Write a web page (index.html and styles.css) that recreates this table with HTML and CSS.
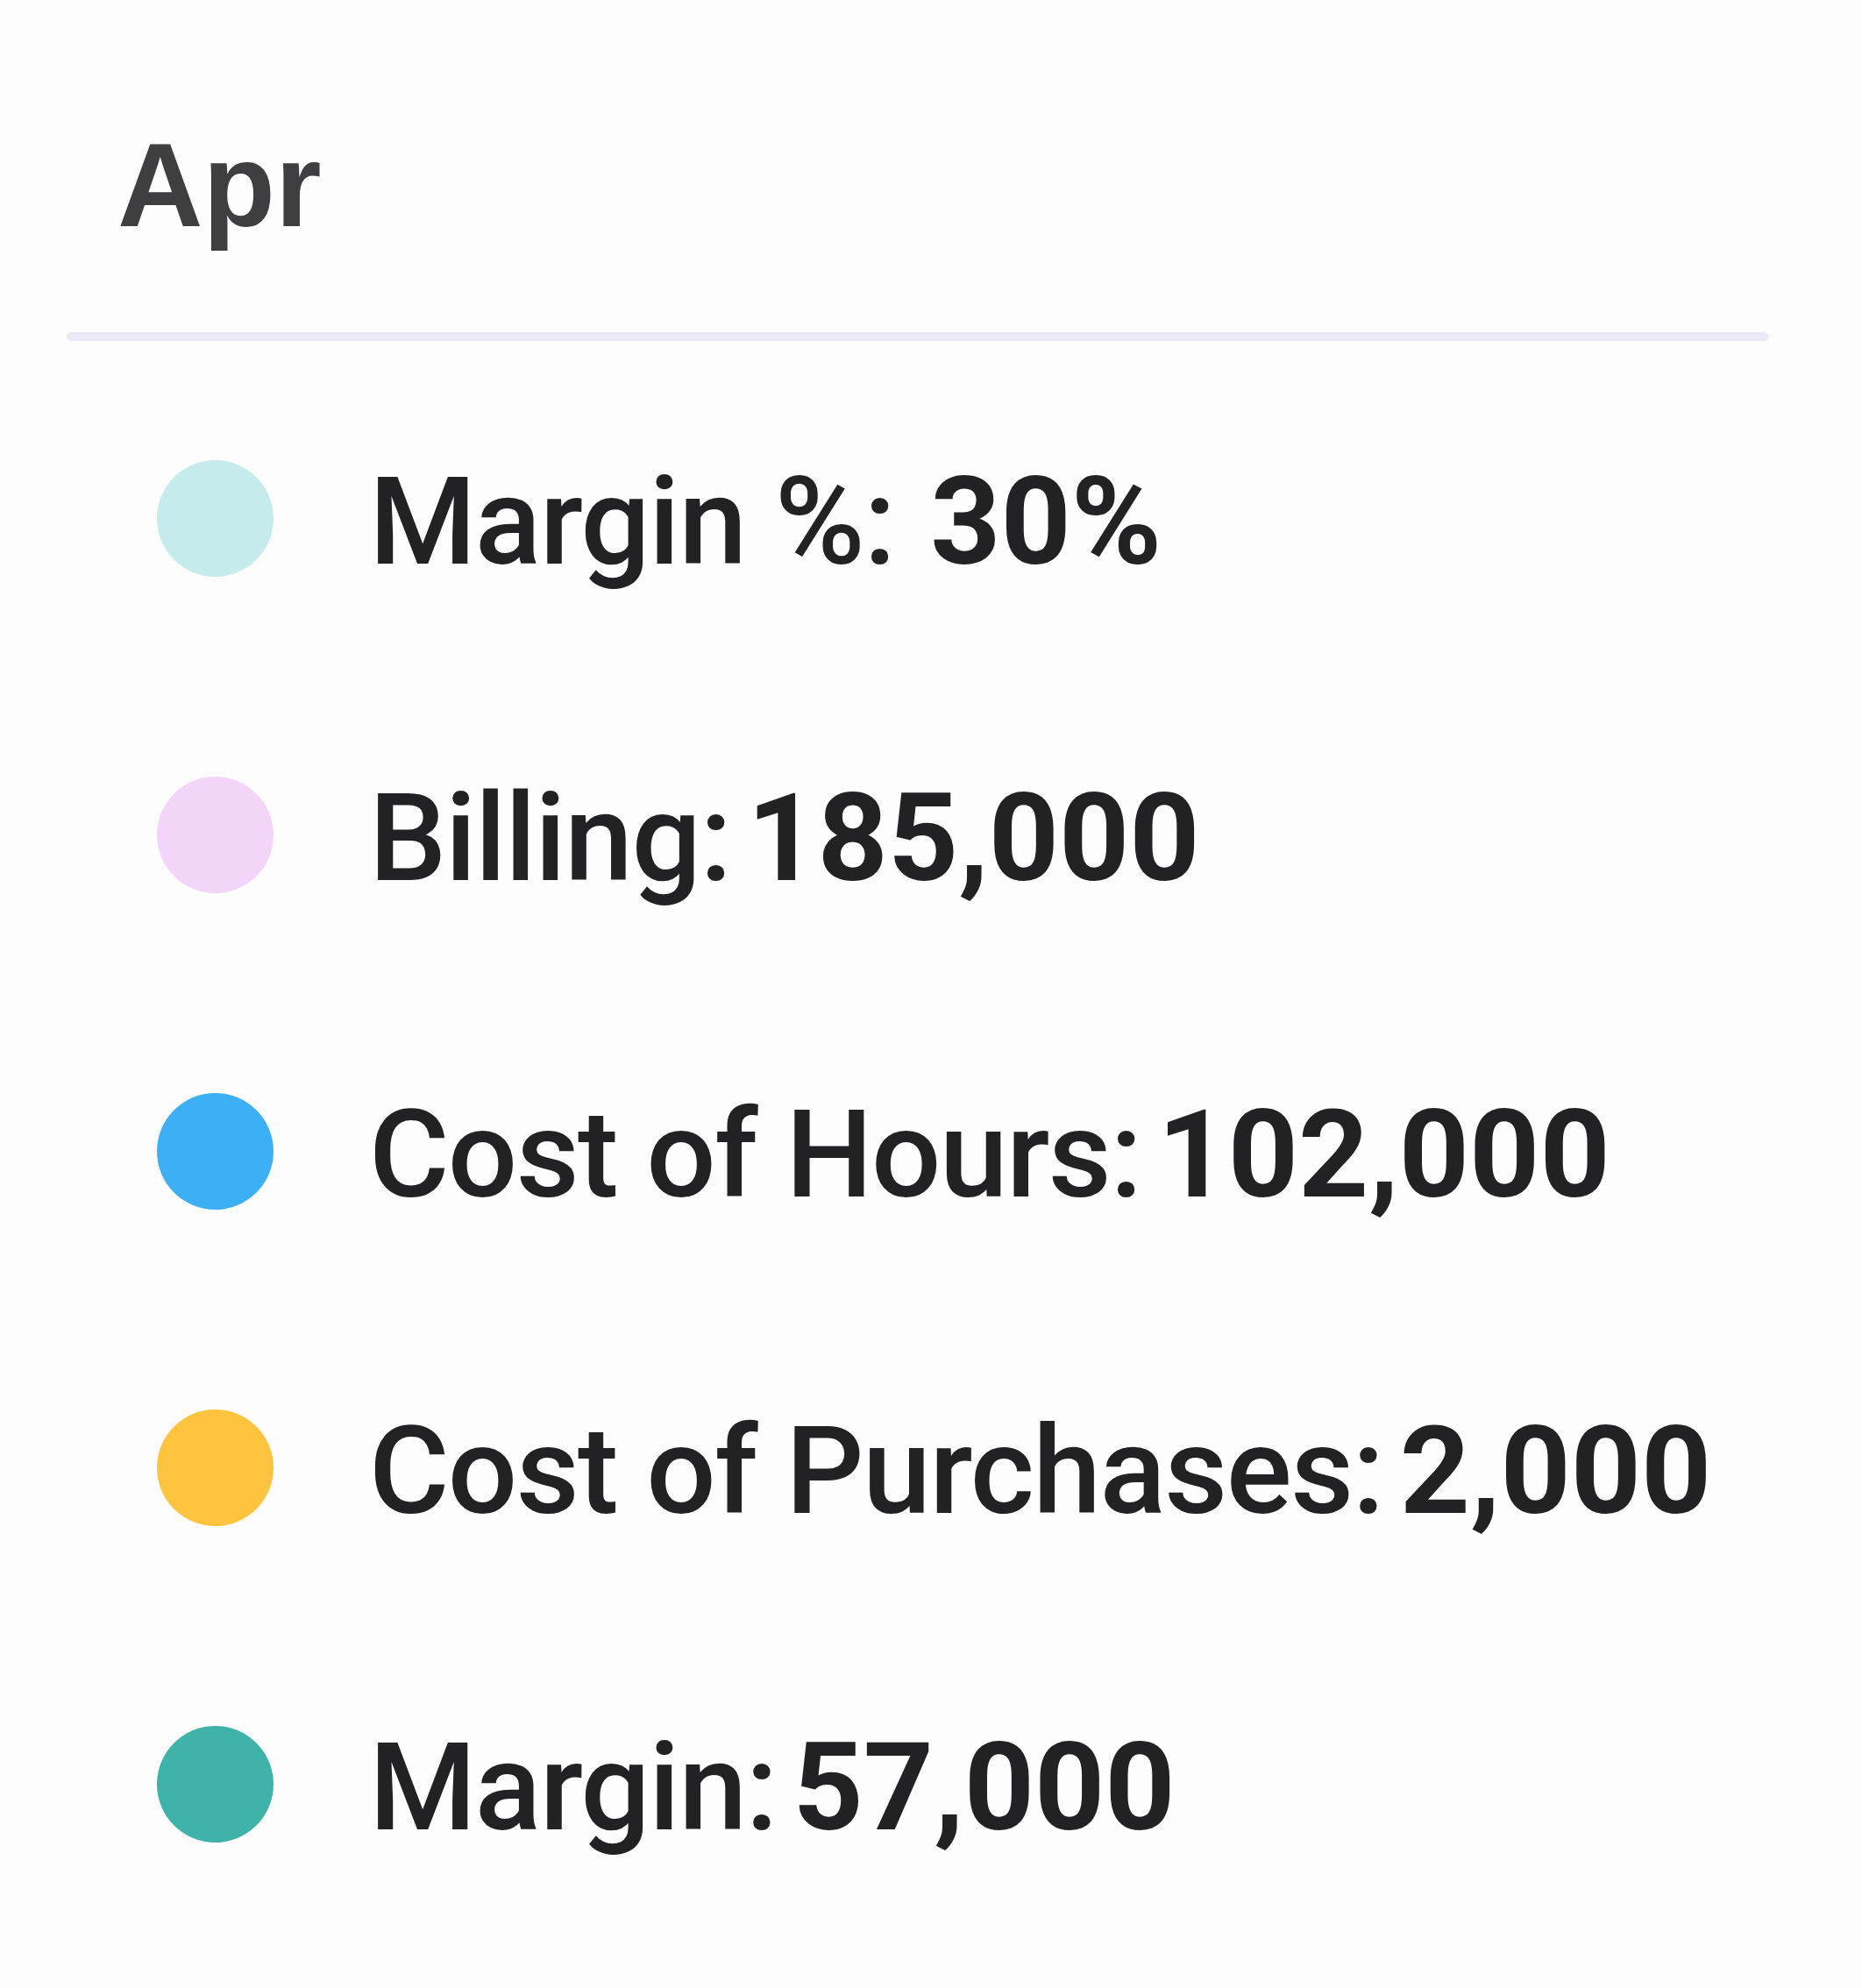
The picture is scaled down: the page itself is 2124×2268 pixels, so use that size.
FILE: index.html
```html
<!DOCTYPE html>
<html lang="en">
<head>
<meta charset="utf-8">
<title>Apr</title>
<link rel="stylesheet" href="styles.css">
</head>
<body>
<div class="card">
  <div class="header">Apr</div>
  <div class="divider"></div>
  <ul class="legend">
    <li class="row"><span class="dot dot-mpct"></span><div class="text"><span class="label">Margin %:</span> <span class="value value-wide">30%</span></div></li>
    <li class="row"><span class="dot dot-billing"></span><div class="text"><span class="label">Billing:</span> <span class="value">185,000</span></div></li>
    <li class="row"><span class="dot dot-hours"></span><div class="text"><span class="label">Cost of Hours:</span> <span class="value">102,000</span></div></li>
    <li class="row"><span class="dot dot-purchases"></span><div class="text"><span class="label">Cost of Purchases:</span> <span class="value">2,000</span></div></li>
    <li class="row"><span class="dot dot-margin"></span><div class="text"><span class="label">Margin:</span> <span class="value">57,000</span></div></li>
  </ul>
</div>
</body>
</html>
```

FILE: styles.css
```css
html, body {
  margin: 0;
  padding: 0;
  background: #ffffff;
}

.card {
  width: 2124px;
  height: 2268px;
  background: #fefdfe;
}

.header {
  padding: 144px 0 0 134px;
  font-family: "Liberation Sans", Arial, sans-serif;
  font-weight: 700;
  font-size: 135px;
  line-height: 135px;
  color: #3f3e41;
  height: 135px;
}

.divider {
  margin: 100px 0 0 76px;
  width: 1942px;
  height: 10px;
  border-radius: 5px;
  background: #ece9f6;
}

.legend {
  list-style: none;
  margin: 0;
  padding: 22px 0 0 0;
}

.row {
  display: flex;
  align-items: center;
  height: 361px;
  padding-left: 179px;
}

.dot {
  flex: none;
  width: 133px;
  height: 133px;
  border-radius: 50%;
  margin-right: 109px;
}

.dot-mpct { background: #c6ebec; }
.dot-billing { background: #f3d5fa; }
.dot-hours { background: #3daff4; }
.dot-purchases { background: #fec33f; }
.dot-margin { background: #3fb2a9; }

.text {
  font-family: Roboto, "Noto Sans", sans-serif;
  font-size: 140px;
  line-height: 140px;
  color: #222124;
  white-space: nowrap;
  word-spacing: -16px;
  position: relative;
  top: 3px;
}

.label {
  font-weight: 500;
  letter-spacing: -1.6px;
  word-spacing: 0;
}

.value {
  font-weight: 700;
}

.value-wide {
  margin-left: 22px;
}
```
